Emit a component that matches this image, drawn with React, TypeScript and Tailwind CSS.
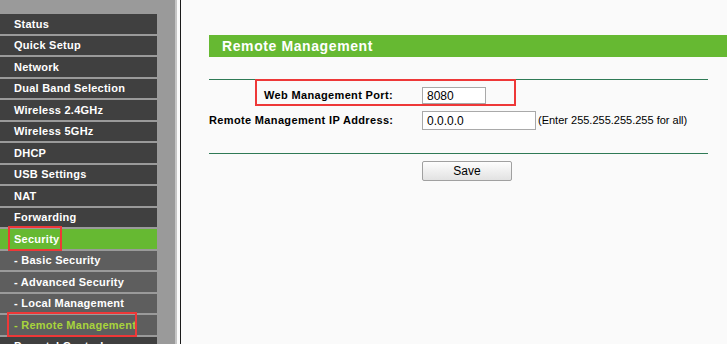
import React from "react";

type Item = { label: string; kind: "main" | "active" | "sub" | "subActive" };

const items: Item[] = [
  { label: "Status", kind: "main" },
  { label: "Quick Setup", kind: "main" },
  { label: "Network", kind: "main" },
  { label: "Dual Band Selection", kind: "main" },
  { label: "Wireless 2.4GHz", kind: "main" },
  { label: "Wireless 5GHz", kind: "main" },
  { label: "DHCP", kind: "main" },
  { label: "USB Settings", kind: "main" },
  { label: "NAT", kind: "main" },
  { label: "Forwarding", kind: "main" },
  { label: "Security", kind: "active" },
  { label: "- Basic Security", kind: "sub" },
  { label: "- Advanced Security", kind: "sub" },
  { label: "- Local Management", kind: "sub" },
  { label: "- Remote Management", kind: "subActive" },
  { label: "Parental Control", kind: "main" },
];

function MenuRow({ item }: { item: Item }) {
  const bg =
    item.kind === "main"
      ? "bg-[#404040]"
      : item.kind === "active"
      ? "bg-[#66b932]"
      : "bg-[#5e5e5e]";
  const color = item.kind === "subActive" ? "text-[#a8d43c]" : "text-white";
  return (
    <div
      className={`${bg} ${color} h-[19.5px] mb-[2px] w-[157px] flex items-center pl-[14px] text-[11px] font-bold tracking-[0.25px] whitespace-nowrap shrink-0`}
    >
      {item.label}
    </div>
  );
}

export default function App() {
  return (
    <div
      className="relative w-[727px] h-[344px] overflow-hidden flex bg-[#fafafa]"
      style={{ fontFamily: '"Liberation Sans", Arial, sans-serif' }}
    >
      {/* Sidebar */}
      <div className="flex shrink-0 h-full">
        <div className="w-[175px] h-full bg-[#9a9a9a] pt-[14px] flex flex-col">
          {items.map((it) => (
            <MenuRow key={it.label} item={it} />
          ))}
        </div>
        <div className="w-[2px] h-full bg-[#c6c6c6]" />
        <div className="w-[3px] h-full bg-[#fafafa]" />
        <div className="w-[1px] h-full bg-[#1a1a1a]" />
      </div>

      {/* Content */}
      <div className="flex-1 pl-[28px] pt-[35px] overflow-hidden">
        <div className="w-[540px] h-[22px] bg-[#66b932] flex items-center pl-[13px] text-white text-[14px] font-bold tracking-[0.6px]">
          Remote Management
        </div>
        <div className="mt-[22px] w-[499px] h-[1px] bg-[#2f7a56]" />

        <div className="grid grid-cols-[184px_auto] gap-x-[29px] items-center mt-[7px]">
          <div className="text-right text-[11px] font-bold tracking-[0.35px] text-black whitespace-nowrap">
            Web Management Port:
          </div>
          <div className="h-[17px] w-[64px] bg-white border border-[#a9a9a9] text-[12px] text-black flex items-center pl-[4px]">
            8080
          </div>

          <div className="mt-[7px] text-right text-[11px] font-bold tracking-[0.35px] text-black whitespace-nowrap">
            Remote Management IP Address:
          </div>
          <div className="mt-[7px] flex items-center">
            <div className="h-[19px] w-[114px] bg-white border border-[#a9a9a9] text-[12px] text-black flex items-center pl-[4px]">
              0.0.0.0
            </div>
            <span className="ml-[2px] text-[11px] text-black whitespace-nowrap">
              (Enter 255.255.255.255 for all)
            </span>
          </div>
        </div>

        <div className="mt-[23px] w-[499px] h-[1px] bg-[#2f7a56]" />

        <div className="mt-[7px] pl-[213px]">
          <button className="w-[90px] h-[20px] rounded-[2px] border border-[#a0a0a0] bg-gradient-to-b from-[#fdfdfd] to-[#e2e2e2] text-[12px] text-black flex items-center justify-center">
            Save
          </button>
        </div>
      </div>

      {/* Red annotation boxes */}
      <div className="absolute left-[8px] top-[226px] w-[54px] h-[25px] border-2 border-[#ee3838]" />
      <div className="absolute left-[7px] top-[312px] w-[130px] h-[25px] border-2 border-[#ee3838]" />
      <div className="absolute left-[255px] top-[79px] w-[261px] h-[27px] border-2 border-[#ee3838]" />
    </div>
  );
}
